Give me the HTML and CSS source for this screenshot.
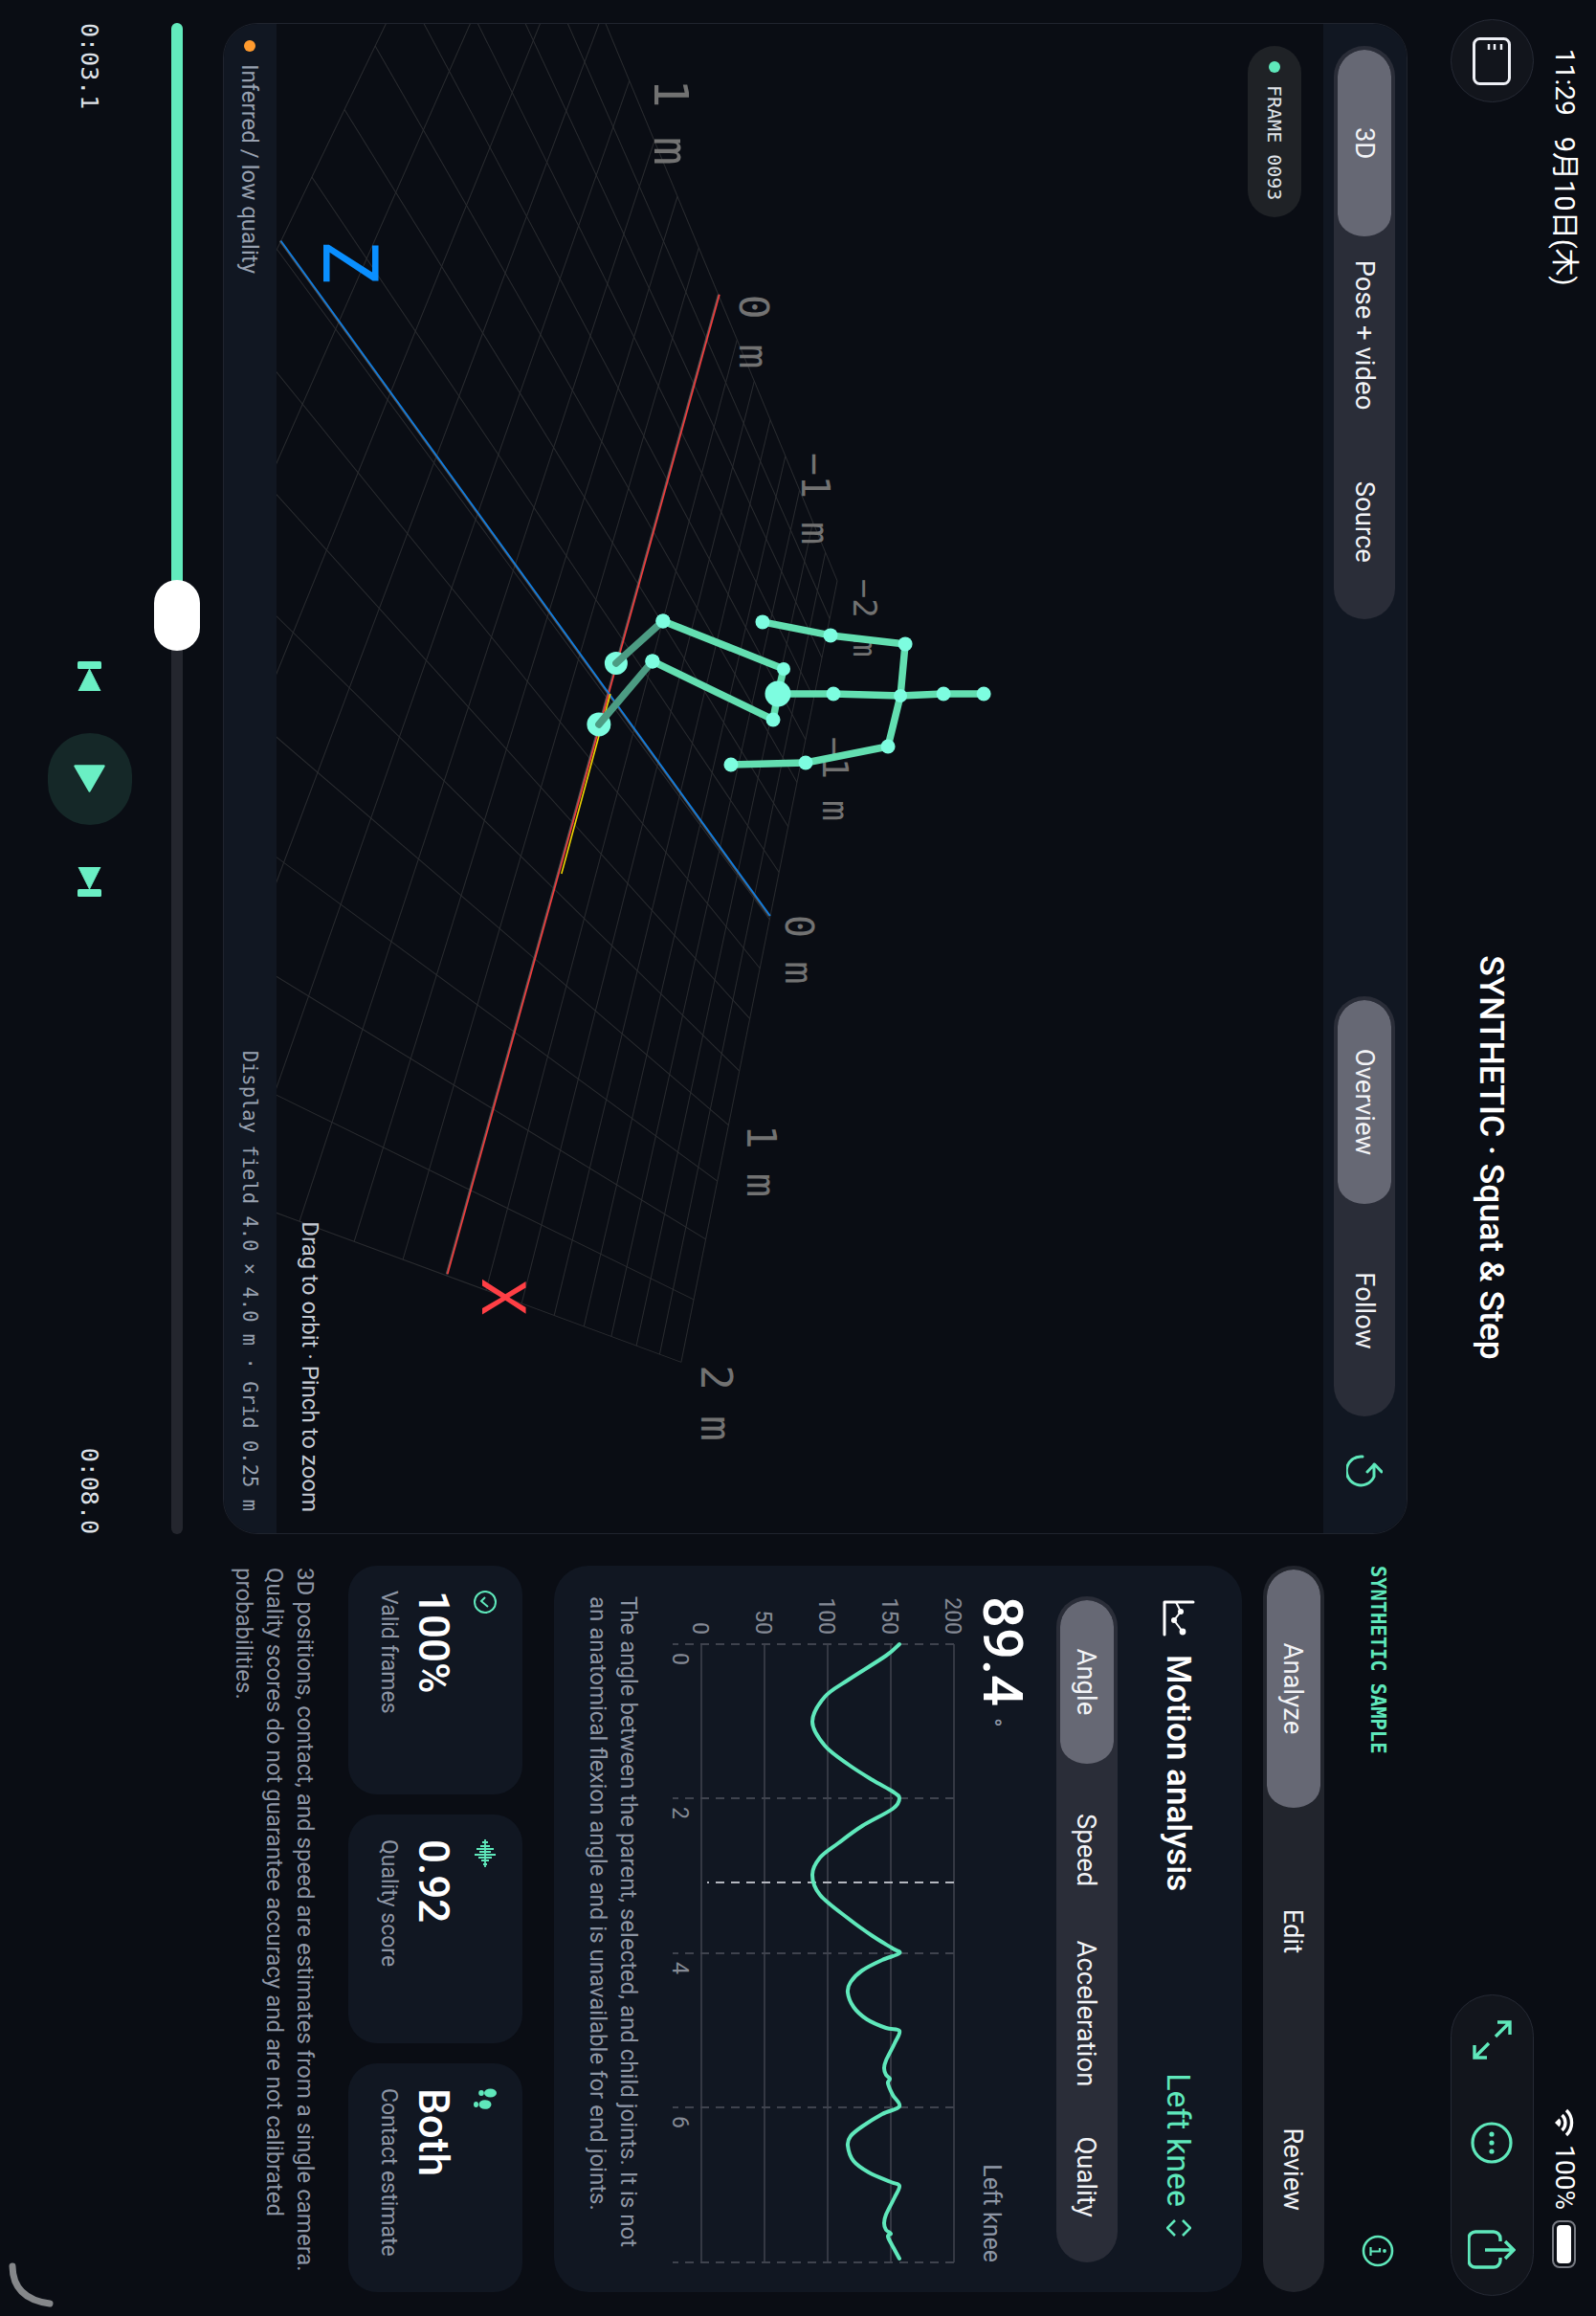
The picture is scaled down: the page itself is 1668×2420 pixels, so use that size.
FILE: index.html
```html
<!DOCTYPE html>
<html lang="en">
<head>
    <meta charset="UTF-8">
    <title>Motion analysis</title>
    <link rel="stylesheet" href="styles.css">
</head>
<body>
    <div class="screen">
        <div class="status">
            <div class="status-time"><span>11:29</span><span class="status-date">9月10日(木)</span></div>
            <div class="status-right">
                <svg class="wifi" viewBox="0 0 30 22"><path d="M2 9a18 18 0 0 1 26 0M7 13.5a11 11 0 0 1 16 0" fill="none" stroke="#fff" stroke-width="3.4"/><path d="M15 21l-4.5-4.5a6.4 6.4 0 0 1 9 0z" fill="#fff"/></svg>
                <span>100%</span>
                <div class="battery"><i></i></div>
            </div>
        </div>

        <div class="topbar">
            <div class="topbar-left">
                <button class="round-btn">
                    <svg viewBox="0 0 50 40" width="50" height="40" fill="none" stroke="#eef0f6" stroke-width="3"><rect x="1.5" y="1.5" width="47" height="37" rx="6"/><path d="M7 10h6M7 17h6M7 23h6" stroke-width="2.5"/></svg>
                </button>
            </div>
            <div class="title">SYNTHETIC · Squat &amp; Step</div>
            <div class="topbar-right">
                <div class="action-pill">
                    <svg viewBox="0 0 41 41" width="41" height="41" fill="none" stroke="#5fe8bb" stroke-width="3.4"><path d="M2 15V2h13M2 2l15 15M39 26v13H26M39 39L24 24"/></svg>
                    <svg viewBox="0 0 44 44" width="44" height="44" fill="none" stroke="#5fe8bb" stroke-width="3.2"><circle cx="22" cy="22" r="20"/><circle cx="13" cy="22" r="2.6" fill="#5fe8bb" stroke="none"/><circle cx="22" cy="22" r="2.6" fill="#5fe8bb" stroke="none"/><circle cx="31" cy="22" r="2.6" fill="#5fe8bb" stroke="none"/></svg>
                    <svg viewBox="0 0 49 50" width="49" height="50" fill="none" stroke="#5fe8bb" stroke-width="3.4"><path d="M16 16h-3a7 7 0 0 0-7 7v19a7 7 0 0 0 7 7h23a7 7 0 0 0 7-7V23a7 7 0 0 0-7-7h-3M25 32V2M16 11l9-9 9 9"/></svg>
                </div>
            </div>
        </div>

        <div class="main">
            <div class="left">
                <div class="viewport">
                    <div class="view-toolbar">
                        <div class="seg seg-mode">
                            <span class="on">3D</span><span>Pose + video</span><span>Source</span>
                        </div>
                        <div class="seg seg-camera">
                            <span class="on">Overview</span><span>Follow</span>
                        </div>
                        <svg class="reset" viewBox="0 0 36 38" width="36" height="38" fill="none" stroke="#5fe8bb" stroke-width="3" stroke-linecap="round" stroke-linejoin="round"><path d="M3 21A15 15 0 1 0 24 9H11M19 1l-8 7.5 8 7.5"/></svg>
                    </div>
                    <div class="scene">
                        <svg id="scene" class="scene-svg" viewBox="25.5 285.5 1576 1093">
                            <g id="grid" stroke="#2a2c30" stroke-width="1" fill="none"></g>
                            <line x1="1331" y1="1201" x2="308" y2="917" stroke="#555" stroke-width="2"/>
                            <line x1="252" y1="1375" x2="957" y2="864" stroke="#555" stroke-width="2"/>
                            <line x1="1331" y1="1200" x2="308" y2="916" stroke="#f43d3d" stroke-width="1.6"/>
                            <line x1="252" y1="1374" x2="957" y2="863" stroke="#0d7fe8" stroke-width="1.6"/>
                            <line x1="725" y1="1030" x2="913" y2="1081" stroke="#f0d400" stroke-width="1.6"/>
                            <g class="axis-label">
                                <text x="83" y="984" font-size="50">1 m</text>
                                <text x="308" y="895" font-size="43">0 m</text>
                                <text x="473" y="830" font-size="40">−1 m</text>
                                <text x="605" y="776" font-size="34">−2 m</text>
                                <text x="770" y="808" font-size="36.5">−1 m</text>
                                <text x="956" y="847" font-size="40">0 m</text>
                                <text x="1175" y="887" font-size="42">1 m</text>
                                <text x="1426" y="935" font-size="44">2 m</text>
                            </g>
                            <text class="axis-name" x="250" y="1330" font-size="78" fill="#0a8fff">Z</text>
                            <text class="axis-name" x="1336" y="1164" font-size="63" fill="#ff3f45">X</text>
                            <g id="skeleton"></g>
                        </svg>
                        <div class="frame-badge"><i></i>FRAME 0093</div>
                        <div class="hint">Drag to orbit · Pinch to zoom</div>
                    </div>
                    <div class="view-foot">
                        <div class="foot-left"><i></i>Inferred / low quality</div>
                        <div class="foot-right">Display field 4.0 × 4.0 m · Grid 0.25 m</div>
                    </div>
                </div>

                <div class="slider">
                    <div class="track">
                        <div class="track-fill" style="width: 39.2%"></div>
                        <div class="thumb" style="left: 39.2%"></div>
                    </div>
                </div>

                <div class="controls">
                    <div class="time">0:03.1</div>
                    <div class="buttons">
                        <svg viewBox="0 0 31 25" width="31" height="25" fill="#6aefc4"><rect width="8" height="25" rx="1.5"/><path d="M8 12.5L31 1v23z" stroke="#6aefc4" stroke-linejoin="round"/></svg>
                        <div class="play"><svg viewBox="0 0 29 33" width="29" height="33" fill="#6aefc4" stroke="#6aefc4" stroke-width="2.4" stroke-linejoin="round"><path d="M1.5 1.5L27.5 16.5 1.5 31.5z"/></svg></div>
                        <svg viewBox="0 0 31 25" width="31" height="25" fill="#6aefc4"><rect x="23" width="8" height="25" rx="1.5"/><path d="M23 12.5L0 1v23z" stroke="#6aefc4" stroke-linejoin="round"/></svg>
                    </div>
                    <div class="time time-end">0:08.0</div>
                </div>
            </div>

            <div class="right">
                <div class="sample-row">
                    <span>SYNTHETIC SAMPLE</span>
                    <svg viewBox="0 0 34 34" width="34" height="34" fill="none" stroke="#5fe8bb" stroke-width="2.6"><circle cx="17" cy="17" r="15"/><path d="M14 15h3.5v9M13 24.5h9" stroke-width="2.2"/><circle cx="17" cy="10" r="1.9" fill="#5fe8bb" stroke="none"/></svg>
                </div>
                <div class="seg seg-panel">
                    <span class="on">Analyze</span><span>Edit</span><span>Review</span>
                </div>

                <div class="card motion">
                    <div class="motion-head">
                        <svg viewBox="0 0 38 34" width="38" height="34" fill="none" stroke="#fff" stroke-width="3"><path d="M2 2v30h34" stroke-linecap="round" stroke-linejoin="round"/><path d="M2 20l10-5 9 7 12-9" stroke-width="2"/><g fill="#fff" stroke="none"><circle cx="12" cy="15" r="3"/><circle cx="21" cy="22" r="3"/><circle cx="33" cy="13" r="3.4"/></g></svg>
                        <h2>Motion analysis</h2>
                        <span class="joint">Left knee</span>
                        <svg viewBox="0 0 18 26" width="18" height="26" fill="none" stroke="#5fe8bb" stroke-width="2.6"><path d="M1 9l8-8 8 8M1 17l8 8 8-8"/></svg>
                    </div>
                    <div class="seg seg-metric">
                        <span class="on">Angle</span><span>Speed</span><span>Acceleration</span><span>Quality</span>
                    </div>
                    <div class="value-row">
                        <span class="value">89.4</span>
                        <span class="unit">°</span>
                        <span class="value-joint">Left knee</span>
                    </div>
                    <svg class="chart" viewBox="1664 660 708 320">
                        <g stroke="#343843" stroke-width="2">
                            <line x1="1718" y1="670" x2="2364" y2="670"/>
                            <line x1="1718" y1="736" x2="2364" y2="736"/>
                            <line x1="1718" y1="802" x2="2364" y2="802"/>
                            <line x1="1718" y1="868" x2="2364" y2="868"/>
                            <line x1="1718" y1="934" x2="2364" y2="934"/>
                        </g>
                        <g stroke="#3f434e" stroke-width="2" stroke-dasharray="9 7">
                            <line x1="1718" y1="670" x2="1718" y2="964"/>
                            <line x1="1879" y1="670" x2="1879" y2="964"/>
                            <line x1="2041" y1="670" x2="2041" y2="964"/>
                            <line x1="2202" y1="670" x2="2202" y2="964"/>
                            <line x1="2364" y1="670" x2="2364" y2="964"/>
                        </g>
                        <line x1="1967" y1="670" x2="1967" y2="928" stroke="#b4b7bf" stroke-width="2" stroke-dasharray="9 7"/>
                        <g class="chart-label" text-anchor="end">
                            <text x="1708" y="679">200</text>
                            <text x="1708" y="745">150</text>
                            <text x="1708" y="811">100</text>
                            <text x="1708" y="877">50</text>
                            <text x="1708" y="943">0</text>
                        </g>
                        <g class="chart-label">
                            <text x="1727" y="964">0</text>
                            <text x="1888" y="964">2</text>
                            <text x="2050" y="964">4</text>
                            <text x="2211" y="964">6</text>
                        </g>
                        <path id="curve" fill="none" stroke="#5fe8bb" stroke-width="4" stroke-linecap="round" stroke-linejoin="round"/>
                    </svg>
                    <p class="motion-note">The angle between the parent, selected, and child joints. It is not an anatomical flexion angle and is unavailable for end joints.</p>
                </div>

                <div class="stats">
                    <div class="card stat">
                        <svg viewBox="0 0 24 24" width="24" height="24" fill="none" stroke="#5fe8bb" stroke-width="2"><circle cx="12" cy="12" r="11"/><path d="M7 12l4 4 6-7"/></svg>
                        <div class="stat-value">100%</div>
                        <div class="stat-label">Valid frames</div>
                    </div>
                    <div class="card stat">
                        <svg viewBox="0 0 29 24" width="29" height="24" fill="none" stroke="#5fe8bb" stroke-width="1.8"><path d="M0 12h29M3 9v6M7 7v10M10 3v18M13 6v12M16 1v22M19 5v14M22 8v8M26 10v4"/></svg>
                        <div class="stat-value">0.92</div>
                        <div class="stat-label">Quality score</div>
                    </div>
                    <div class="card stat">
                        <svg viewBox="0 0 24 24" width="24" height="24" fill="#5fe8bb"><ellipse cx="5" cy="6.5" rx="4.5" ry="6.5"/><ellipse cx="5" cy="16" rx="3" ry="2.8"/><ellipse cx="17" cy="12" rx="4.8" ry="6.5"/><ellipse cx="17" cy="21.5" rx="3" ry="2.5"/></svg>
                        <div class="stat-value">Both</div>
                        <div class="stat-label">Contact estimate</div>
                    </div>
                </div>

                <p class="disclaimer">3D positions, contact, and speed are estimates from a single camera. Quality scores do not guarantee accuracy and are not calibrated probabilities.</p>
            </div>
        </div>

        <svg class="corner-handle" viewBox="0 0 56 56" width="56" height="56" fill="none" stroke="#85878a" stroke-width="7" stroke-linecap="round"><path d="M8 47Q42 46.5 47 8"/></svg>
    </div>
    <script src="script.js"></script>
</body>
</html>
```

FILE: styles.css
```css
html, body {
    margin: 0;
    height: 100%;
    overflow: hidden;
    background: #0a0d14;
}

/* the device was held sideways, so the whole UI is laid out landscape and turned */
.screen {
    position: absolute;
    left: 0;
    top: 0;
    width: 2420px;
    height: 1668px;
    transform-origin: 0 0;
    transform: translateX(1668px) rotate(90deg);
    background: #0a0d14;
    color: #f2f3f6;
    font-family: Roboto, "Noto Sans CJK JP", sans-serif;
    font-size: 27.5px;
}

.status {
    display: flex;
    justify-content: space-between;
    align-items: center;
    height: 24px;
    padding: 21px 50px 0 51px;
    font-size: 28px;
    line-height: 24px;
    color: #fff;
}

.status-time {
    display: flex;
    gap: 22px;
}

.status-date {
    font-size: 29px;
}

.status-right {
    display: flex;
    align-items: center;
}

.wifi {
    width: 30px;
    height: 22px;
    margin-right: 8px;
}

.battery {
    position: relative;
    box-sizing: border-box;
    width: 50px;
    height: 25px;
    margin-left: 11px;
    padding: 3px;
    border: 2px solid #777a82;
    border-radius: 8px;
}

.battery i {
    display: block;
    height: 100%;
    background: #fff;
    border-radius: 4px;
}

.topbar {
    display: grid;
    grid-template-columns: 1fr auto 1fr;
    align-items: center;
    height: 87px;
    margin-top: 20px;
    padding: 0 21px 0 20px;
}

.topbar-right {
    display: flex;
    justify-content: flex-end;
}

.round-btn {
    display: flex;
    align-items: center;
    justify-content: center;
    box-sizing: border-box;
    width: 87px;
    height: 87px;
    padding: 0;
    background: #12151c;
    border: 1px solid #262a35;
    border-radius: 50%;
}

.title {
    font-size: 35.5px;
    font-weight: 500;
    color: #fff;
}

.action-pill {
    display: flex;
    align-items: center;
    justify-content: space-between;
    box-sizing: border-box;
    width: 315px;
    height: 87px;
    padding: 0 23px 0 26px;
    background: #12151c;
    border: 1px solid #262a35;
    border-radius: 44px;
}

.main {
    display: grid;
    grid-template-columns: 1579px 759px;
    column-gap: 33px;
    margin-top: 45px;
    padding-left: 24px;
}

.viewport {
    display: flex;
    flex-direction: column;
    box-sizing: border-box;
    height: 1238px;
    border: 1.5px solid #20242e;
    border-radius: 36px;
    overflow: hidden;
}

.view-toolbar {
    display: flex;
    align-items: center;
    flex: none;
    height: 87px;
    padding: 0 47px 0 23px;
    background: #111722;
}

.seg {
    display: flex;
    box-sizing: border-box;
    height: 64px;
    padding: 4px;
    background: #2a2d38;
    border-radius: 32px;
}

.seg span {
    flex: 1;
    display: flex;
    align-items: center;
    justify-content: center;
    border-radius: 28px;
}

.seg .on {
    background: #666874;
    background-clip: padding-box;
    border-right: 5px solid transparent;
}

.seg-mode {
    width: 599px;
}

.seg-camera {
    width: 439px;
    margin-left: auto;
}

.reset {
    margin-left: 39px;
}

.scene {
    position: relative;
    flex: 1;
    background: #0a0d14;
}

.scene-svg {
    position: absolute;
    left: 0;
    top: 0;
    width: 100%;
    height: 100%;
}

.axis-label text, .axis-name {
    font-family: "DejaVu Sans Mono", monospace;
}

.axis-label {
    fill: #727272;
}

.frame-badge {
    position: absolute;
    left: 23px;
    top: 23px;
    display: flex;
    align-items: center;
    box-sizing: border-box;
    width: 179px;
    height: 56px;
    padding-left: 16px;
    background: #1f2226;
    border-radius: 28px;
    font-family: "DejaVu Sans Mono", monospace;
    font-size: 20px;
    color: #dfe2e8;
}

.frame-badge i {
    width: 12px;
    height: 12px;
    margin-right: 13px;
    background: #5fe8bb;
    border-radius: 50%;
}

.hint {
    position: absolute;
    right: 22px;
    bottom: 21px;
    font-size: 24px;
    color: #c6cbd4;
}

.view-foot {
    display: flex;
    justify-content: space-between;
    align-items: center;
    flex: none;
    height: 55px;
    padding: 0 23px 0 17px;
    background: #111722;
    color: #98a1b0;
}

.foot-left {
    display: flex;
    align-items: center;
    font-size: 24px;
}

.foot-left i {
    width: 12px;
    height: 12px;
    margin-right: 13px;
    background: #ff9a2e;
    border-radius: 50%;
}

.foot-right {
    font-family: "DejaVu Sans Mono", monospace;
    font-size: 20.5px;
}

.slider {
    display: flex;
    align-items: center;
    height: 48px;
    margin-top: 24px;
}

.track {
    position: relative;
    width: 100%;
    height: 12px;
    background: #24262e;
    border-radius: 6px;
}

.track-fill {
    height: 100%;
    background: #62ebbd;
    border-radius: 6px;
}

.thumb {
    position: absolute;
    top: -18px;
    width: 74px;
    height: 48px;
    margin-left: -37px;
    background: #fff;
    border-radius: 24px;
}

.controls {
    display: grid;
    grid-template-columns: 1fr auto 1fr;
    align-items: center;
    height: 88px;
    margin-top: 23px;
}

.time {
    font-family: "DejaVu Sans Mono", monospace;
    font-size: 25px;
    color: #dfe2e8;
}

.time-end {
    text-align: right;
}

.buttons {
    display: flex;
    align-items: center;
    gap: 44px;
}

.play {
    display: flex;
    align-items: center;
    justify-content: center;
    width: 96px;
    height: 88px;
    background: #152828;
    border-radius: 44px;
}

.right {
    display: flex;
    flex-direction: column;
}

.sample-row {
    display: flex;
    align-items: center;
    justify-content: space-between;
    height: 34px;
    margin-top: 14px;
    padding-right: 26px;
    font-family: "DejaVu Sans Mono", monospace;
    font-size: 20.4px;
    font-weight: 700;
    color: #5fe8bb;
}

.seg-panel {
    margin-top: 39px;
    background: #22252d;
}

.card {
    background: #111722;
}

.motion {
    box-sizing: border-box;
    height: 719px;
    margin-top: 22px;
    padding: 46px 31px 0 32px;
    border-radius: 36px;
}

.motion-head {
    display: flex;
    align-items: center;
    height: 40px;
    padding: 0 27px 0 4px;
}

.motion-head h2 {
    margin: 0 0 0 19px;
    font-size: 35px;
    font-weight: 500;
    color: #fff;
}

.joint {
    margin-left: auto;
    margin-right: 13px;
    font-size: 34px;
    color: #5fe8bb;
}

.seg-metric {
    margin-top: 44px;
}

.value-row {
    display: flex;
    align-items: baseline;
    height: 60px;
    margin-top: 26px;
    line-height: 60px;
}

.value {
    font-size: 58px;
    font-weight: 500;
    color: #fff;
}

.unit {
    margin-left: 12px;
    font-size: 26px;
    color: #8e96a5;
}

.value-joint {
    margin-left: auto;
    font-size: 25px;
    color: #8e96a5;
}

.chart {
    display: block;
    width: 708px;
    height: 320px;
    margin: 11px 0 0 -4px;
}

.chart-label {
    font-size: 23px;
    fill: #858a95;
}

.motion-note {
    margin: 14px 0 0;
    font-size: 24px;
    line-height: 32px;
    color: #8e96a5;
}

.stats {
    display: flex;
    gap: 21px;
    margin-top: 33px;
}

.stat {
    flex: 1;
    box-sizing: border-box;
    height: 182px;
    padding: 27px 0 0 26px;
    border-radius: 30px;
}

.stat svg {
    display: block;
}

.stat-value {
    margin-top: 17px;
    font-size: 44px;
    font-weight: 500;
    line-height: 50px;
    color: #fff;
}

.stat-label {
    margin-top: 7px;
    font-size: 23px;
    line-height: 30px;
    color: #8e96a5;
}

.disclaimer {
    margin: 29px 0 0;
    padding-left: 2px;
    font-size: 24px;
    line-height: 32px;
    color: #8e96a5;
}

.corner-handle {
    position: absolute;
    left: 2360px;
    top: 1608px;
}
```

FILE: script.js
```js
var NS = 'http://www.w3.org/2000/svg';

function add(parent, tag, attrs) {
    var el = document.createElementNS(NS, tag);
    for (var k in attrs) el.setAttribute(k, attrs[k]);
    parent.appendChild(el);
    return el;
}

// floor grid: 4 x 4 m at 0.25 m, projected through the four floor corners
function projector(p0, p1, p2, p3) {
    var dx1 = p1[0] - p2[0], dx2 = p3[0] - p2[0], sx = p0[0] - p1[0] + p2[0] - p3[0];
    var dy1 = p1[1] - p2[1], dy2 = p3[1] - p2[1], sy = p0[1] - p1[1] + p2[1] - p3[1];
    var den = dx1 * dy2 - dx2 * dy1;
    var g = (sx * dy2 - dx2 * sy) / den;
    var h = (dx1 * sy - sx * dy1) / den;
    var a = p1[0] - p0[0] + g * p1[0], b = p3[0] - p0[0] + h * p3[0];
    var d = p1[1] - p0[1] + g * p1[1], e = p3[1] - p0[1] + h * p3[1];
    return function (s, t) {
        var w = g * s + h * t + 1;
        return [(a * s + b * t + p0[0]) / w, (d * s + e * t + p0[1]) / w];
    };
}

var project = projector([607, 793], [1423, 956], [1115, 1791], [-230, 1141]);
var grid = document.getElementById('grid');
for (var i = 0; i <= 16; i++) {
    var n = i / 16;
    var a = project(n, 0), b = project(n, 1);
    add(grid, 'line', { x1: a[0], y1: a[1], x2: b[0], y2: b[1] });
    a = project(0, n); b = project(1, n);
    add(grid, 'line', { x1: a[0], y1: a[1], x2: b[0], y2: b[1] });
}

// skeleton
var joints = {
    kneeA: [693, 1024, 12], kneeB: [757, 1042, 12.5], hipA: [649, 975, 7.5], hipB: [691, 986, 7.5],
    legA: [699, 849, 7], legB: [752, 860, 7.5], pelvis: [725, 855, 13.5],
    spine: [725, 797, 7.5], neck: [727, 727, 7], chin: [725, 682, 7.5], head: [725, 640, 7.5],
    shoulderA: [673, 722, 7.5], elbowA: [664, 800, 7.5], wristA: [650, 871, 7.5],
    shoulderB: [780, 740, 7.5], elbowB: [797, 826, 7.5], wristB: [799, 904, 7.5]
};
var far = [['kneeA', 'hipA'], ['kneeB', 'hipB']];
var near = [
    ['hipA', 'legA'], ['hipB', 'legB'], ['legA', 'pelvis'], ['legB', 'pelvis'],
    ['pelvis', 'spine'], ['spine', 'neck'], ['neck', 'chin'], ['chin', 'head'],
    ['neck', 'shoulderA'], ['shoulderA', 'elbowA'], ['elbowA', 'wristA'],
    ['neck', 'shoulderB'], ['shoulderB', 'elbowB'], ['elbowB', 'wristB']
];
var skeleton = document.getElementById('skeleton');

function bone(pair, color) {
    var p = joints[pair[0]], q = joints[pair[1]];
    add(skeleton, 'line', { x1: p[0], y1: p[1], x2: q[0], y2: q[1], stroke: color, 'stroke-width': 7.5, 'stroke-linecap': 'round' });
}

near.forEach(function (pair) { bone(pair, '#63dfb1'); });
for (var name in joints) {
    var j = joints[name];
    add(skeleton, 'circle', { cx: j[0], cy: j[1], r: j[2], fill: '#7dfde0' });
}
far.forEach(function (pair) { bone(pair, '#4c9c83'); });
add(skeleton, 'circle', { cx: 649, cy: 975, r: 7.5, fill: '#7dfde0' });
add(skeleton, 'circle', { cx: 691, cy: 986, r: 7.5, fill: '#7dfde0' });

var pts = [
    [1718, 727], [1730, 741], [1755, 780], [1773, 805], [1799, 818], [1824, 805], [1844, 780], [1860, 755], [1872, 734],
    [1879, 727], [1890, 734], [1908, 766], [1926, 791], [1941, 810], [1959, 818], [1980, 810], [2005, 780], [2023, 755],
    [2036, 734], [2041, 727], [2048, 745], [2059, 766], [2071, 778], [2082, 781], [2097, 775], [2110, 761], [2119, 741],
    [2122, 727], [2135, 732], [2153, 741], [2161, 743], [2168, 741], [2172, 737], [2177, 739], [2189, 734], [2201, 727],
    [2209, 745], [2222, 766], [2232, 778], [2242, 781], [2258, 775], [2270, 759], [2280, 736], [2284, 727], [2296, 732],
    [2314, 741], [2323, 743], [2330, 741], [2334, 736], [2337, 739], [2349, 733], [2360, 727]
];
var d = 'M' + pts[0][0] + ' ' + pts[0][1];
for (var c = 1; c < pts.length; c++) {
    var p0 = pts[Math.max(c - 2, 0)], p1 = pts[c - 1], p2 = pts[c], p3 = pts[Math.min(c + 1, pts.length - 1)];
    d += 'C' + (p1[0] + (p2[0] - p0[0]) / 6).toFixed(1) + ' ' + (p1[1] + (p2[1] - p0[1]) / 6).toFixed(1) + ' ' +
        (p2[0] - (p3[0] - p1[0]) / 6).toFixed(1) + ' ' + (p2[1] - (p3[1] - p1[1]) / 6).toFixed(1) + ' ' + p2[0] + ' ' + p2[1];
}
document.getElementById('curve').setAttribute('d', d);
```
